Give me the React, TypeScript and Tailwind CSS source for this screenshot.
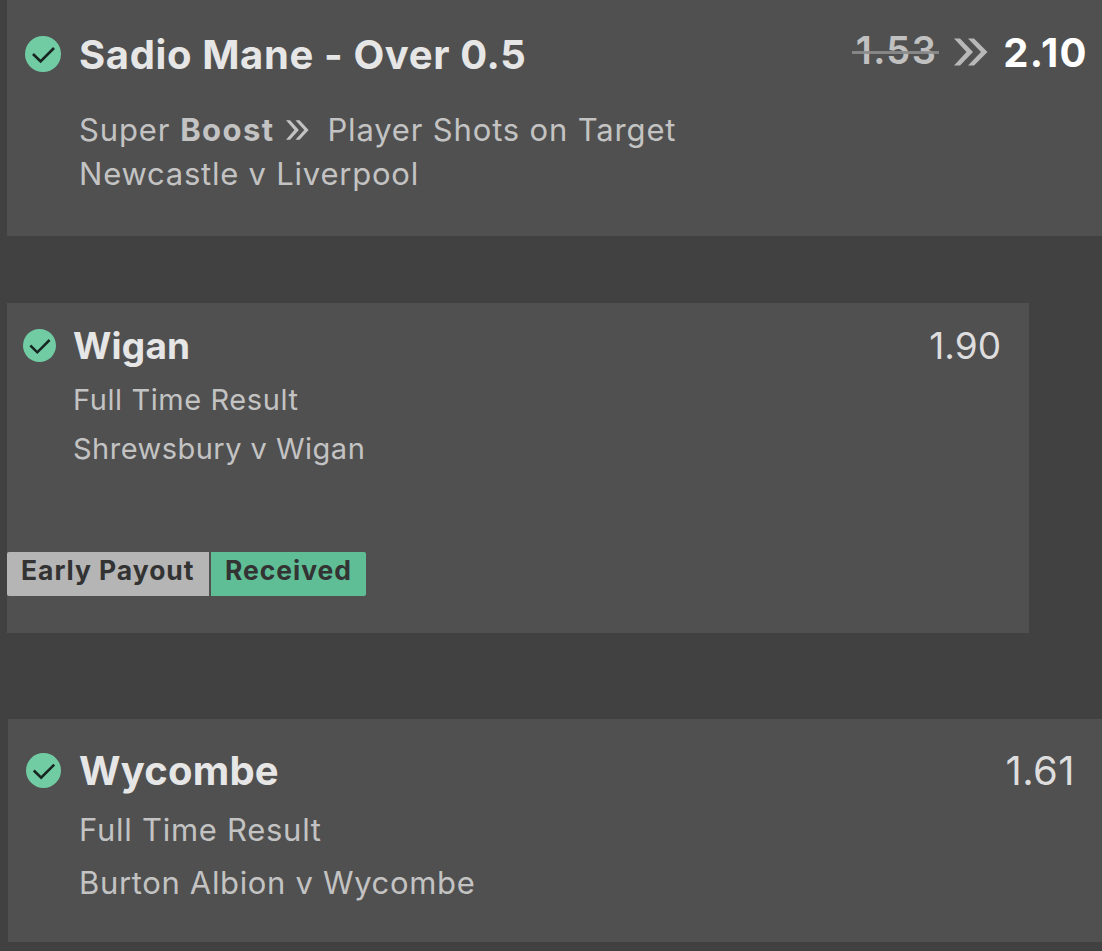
import type { ReactNode } from 'react';

const CheckBadge = ({ className }: { className: string }) => (
  <svg viewBox="0 0 36 36" className={`shrink-0 ${className}`} fill="none">
    <circle cx="18" cy="18" r="18" fill="#71cca4" />
    <path d="M8 18l7.6 7.4L29 12" stroke="#172620" strokeWidth="2.7" />
  </svg>
);

// flat-cut double arrow
const Chevrons = ({ className }: { className: string }) => (
  <svg viewBox="0 0 34 28" className={`shrink-0 ${className}`} fill="currentColor" preserveAspectRatio="none">
    <path d="M0 0.5h6l13 13.5L6 27.5H0L12.5 14z" />
    <path d="M14 0.5h6L33.5 14 20 27.5H14L27 14z" />
  </svg>
);

const Line = ({ className, children }: { className: string; children: ReactNode }) => (
  <p className={`whitespace-nowrap text-[#c3c3c3] ${className}`}>{children}</p>
);

export default function App() {
  return (
    <div className="h-[951px] w-[1102px] overflow-hidden bg-[#414141] pl-[7px] font-['Inter',sans-serif]">
      <section className="h-[236px] bg-[#505050] pt-[31px] pl-[18px]">
        <div className="flex h-[46px] items-center pr-[14px]">
          <CheckBadge className="h-9 w-9" />
          <h2 className="ml-[18px] pt-[2px] whitespace-nowrap text-[40px] font-bold tracking-[0.62px] text-[#e6e6e6]">Sadio Mane - Over 0.5</h2>
          <span className="relative ml-auto px-[4px] pb-[8px] text-[38px] leading-[38px] font-semibold tracking-[1.4px] text-[#c0c0c0]">
            1.53
            <span className="absolute top-[20px] left-0 h-[3px] w-[87px] bg-[#8c8c8c]/90" />
          </span>
          <Chevrons className="mr-[15px] mb-[4px] ml-[13px] h-[28px] w-[34px] text-[#b8b8b8]" />
          <span className="pb-[3px] text-[40px] leading-[40px] font-bold tracking-[1.4px] text-white">2.10</span>
        </div>
        <div className="mt-[31px] ml-[54px]">
          <Line className="flex h-[44px] items-center text-[31px] tracking-[0.84px]">
            Super <b className="ml-[10px] tracking-[1.4px]">Boost</b>
            <Chevrons className="mr-[18px] ml-[12px] h-[20px] w-[23px]" />
            Player Shots on Target
          </Line>
          <Line className="h-[44px] text-[31px] leading-[44px] tracking-[0.77px]">Newcastle v Liverpool</Line>
        </div>
      </section>

      <section className="mt-[67px] h-[330px] w-[1022px] bg-[#505050] pt-[19px]">
        <div className="flex h-[46px] items-center pr-[28px] pl-[16px]">
          <CheckBadge className="h-[33px] w-[33px]" />
          <h2 className="ml-[17px] pt-[2px] text-[37px] font-bold tracking-[0.2px] text-[#e6e6e6]">Wigan</h2>
          <span className="ml-auto pt-[2px] text-[37px] text-[#dddddd]">1.90</span>
        </div>
        <div className="mt-[7px] ml-[66px]">
          <Line className="text-[29px] leading-[49px] tracking-[0.58px]">Full Time Result</Line>
          <Line className="text-[29px] leading-[49px] tracking-[0.48px]">Shrewsbury v Wigan</Line>
        </div>
        <div className="mt-[79px] flex h-[44px] gap-[2px] whitespace-nowrap text-[26.5px] leading-[37px] font-bold tracking-[0.95px] text-[#333333]">
          <span className="w-[202px] rounded-l-[2px] bg-[#b5b5b5] pl-[14px]">Early Payout</span>
          <span className="w-[155px] rounded-r-[2px] bg-[#5fbe95] pl-[14px]">Received</span>
        </div>
      </section>

      <section className="mt-[86px] ml-px h-[223px] bg-[#505050] pt-[28px]">
        <div className="flex h-[46px] items-center pr-[27px] pl-[18px]">
          <CheckBadge className="h-[35px] w-[35px]" />
          <h2 className="ml-[18px] pt-[2px] text-[40px] font-bold tracking-[0.2px] text-[#e6e6e6]">Wycombe</h2>
          <span className="ml-auto pt-[2px] text-[40px] tracking-[0.4px] text-[#dddddd]">1.61</span>
        </div>
        <div className="mt-[10px] ml-[71px]">
          <Line className="text-[31px] leading-[53px] tracking-[0.72px]">Full Time Result</Line>
          <Line className="text-[31px] leading-[53px] tracking-[0.66px]">Burton Albion v Wycombe</Line>
        </div>
      </section>
    </div>
  );
}
